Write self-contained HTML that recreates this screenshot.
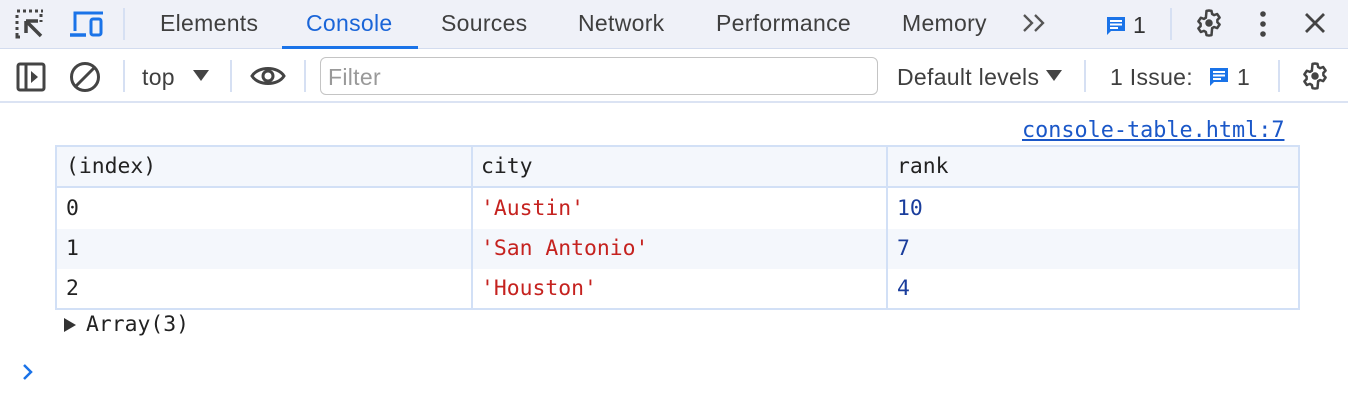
<!DOCTYPE html>
<html><head><style>
*{margin:0;padding:0;box-sizing:border-box}
body{width:1348px;height:415px;background:#fff;position:relative;overflow:hidden;font-family:"Liberation Sans",Arial,sans-serif;color:#3c3c3c}
.a{position:absolute}
.tb{left:0;top:0;width:1348px;height:49px;background:#eff1f8;border-bottom:1px solid #d3dcef}
.t{font-size:23px;top:10px;color:#3f3f3f;letter-spacing:0.3px}
.bar2{left:0;top:50px;width:1348px;height:53px;background:#fff;border-bottom:2px solid #dbe3f3}
.sep{width:2px;background:#d6e0f3}
.mono{font-family:"DejaVu Sans Mono","Liberation Mono",monospace;font-size:21.4px;color:#222}
.cell{position:absolute;height:40px;line-height:40px}
</style></head><body>
<div class="a tb"></div>
<svg class="a" style="left:15px;top:9px" width="30" height="30" viewBox="0 0 30 30"><path d="M2 2h3M8 2h3M14 2h3M20 2h3M26 2h2M2 6v3M2 12v3M2 18v3M2 24v4h3M26 5v3M26 11v2" stroke="#444" stroke-width="3" fill="none"/><path d="M11 12h12M11 12v12M11 12l15 15" stroke="#444" stroke-width="3.5" fill="none"/></svg>
<svg class="a" style="left:68px;top:8px" width="36" height="30" viewBox="0 0 36 30"><path d="M7 23V5h28" stroke="#1a73e8" stroke-width="3" fill="none"/><path d="M2 27h16" stroke="#1a73e8" stroke-width="3.5"/><rect x="23" y="11" width="10" height="16" rx="2" fill="none" stroke="#1a73e8" stroke-width="3"/></svg>
<div class="a sep" style="left:123px;top:8px;height:32px"></div>
<div class="a t" style="left:160px">Elements</div>
<div class="a t" style="left:306px;color:#1a65d8">Console</div>
<div class="a" style="left:282px;top:46px;width:136px;height:3px;background:#1a73e8"></div>
<div class="a t" style="left:441px">Sources</div>
<div class="a t" style="left:578px">Network</div>
<div class="a t" style="left:716px">Performance</div>
<div class="a t" style="left:902px">Memory</div>
<svg class="a" style="left:1022px;top:13px" width="26" height="20" viewBox="0 0 26 20"><path d="M2 2l8 8-8 8M13 2l8 8-8 8" stroke="#555" stroke-width="2.3" fill="none"/></svg>
<svg class="a" style="left:1105px;top:15px" width="22" height="22" viewBox="0 0 22 22"><path d="M2 2h18v14H6l-4 4z" fill="#1a73e8"/><path d="M5 6h12M5 9.5h12M5 13h8" stroke="#fff" stroke-width="2"/></svg>
<div class="a t" style="left:1133px;top:12px;color:#333">1</div>
<div class="a sep" style="left:1170px;top:8px;height:32px"></div>
<svg class="a" style="left:1194px;top:8px" width="30" height="30" viewBox="0 0 24 24"><path d="M12 2l2 .3.5 2.5 1.6.9 2.4-.9 2 2.9-1.8 1.8v1.9l1.8 1.8-2 2.9-2.4-.9-1.6.9L14 21.7 12 22l-2-.3-.5-2.5-1.6-.9-2.4.9-2-2.9 1.8-1.8v-1.9L3.5 10.7l2-2.9 2.4.9 1.6-.9L10 2.3z" fill="none" stroke="#444" stroke-width="2" stroke-linejoin="round"/><circle cx="12" cy="12" r="3" fill="#444"/></svg>
<svg class="a" style="left:1257px;top:10px" width="12" height="28" viewBox="0 0 12 28"><circle cx="6" cy="4" r="2.8" fill="#444"/><circle cx="6" cy="14" r="2.8" fill="#444"/><circle cx="6" cy="24" r="2.8" fill="#444"/></svg>
<svg class="a" style="left:1304px;top:12px" width="22" height="22" viewBox="0 0 22 22"><path d="M2 2l18 18M20 2L2 20" stroke="#444" stroke-width="2.8"/></svg>

<div class="a bar2"></div>
<svg class="a" style="left:16px;top:62px" width="30" height="30" viewBox="0 0 30 30"><rect x="2" y="2" width="26" height="26" rx="2" fill="none" stroke="#444" stroke-width="3"/><path d="M10 2v26" stroke="#444" stroke-width="3"/><path d="M15 9l7 6-7 6z" fill="#444"/></svg>
<svg class="a" style="left:69px;top:61px" width="32" height="32" viewBox="0 0 32 32"><circle cx="16" cy="16" r="13.5" fill="none" stroke="#444" stroke-width="3"/><path d="M7 25L25 7" stroke="#444" stroke-width="3"/></svg>
<div class="a sep" style="left:123px;top:60px;height:32px"></div>
<div class="a t" style="left:142px;top:64px">top</div>
<svg class="a" style="left:193px;top:70px" width="16" height="12"><path d="M0 0h16L8 11z" fill="#444"/></svg>
<div class="a sep" style="left:230px;top:60px;height:32px"></div>
<svg class="a" style="left:250px;top:63px" width="36" height="26" viewBox="0 0 36 26"><path d="M2 13C8 3 28 3 34 13C28 23 8 23 2 13z" fill="none" stroke="#444" stroke-width="3"/><circle cx="18" cy="13" r="5" fill="none" stroke="#444" stroke-width="3"/></svg>
<div class="a sep" style="left:304px;top:60px;height:32px"></div>
<div class="a" style="left:320px;top:57px;width:558px;height:38px;border:1.5px solid #c4c4c4;border-radius:6px"></div>
<div class="a t" style="left:328px;top:64px;color:#999">Filter</div>
<div class="a t" style="left:897px;top:64px">Default levels</div>
<svg class="a" style="left:1046px;top:70px" width="16" height="12"><path d="M0 0h16L8 11z" fill="#444"/></svg>
<div class="a sep" style="left:1084px;top:60px;height:32px"></div>
<div class="a t" style="left:1110px;top:64px">1 Issue:</div>
<svg class="a" style="left:1208px;top:66px" width="22" height="22" viewBox="0 0 22 22"><path d="M2 2h18v14H6l-4 4z" fill="#1a73e8"/><path d="M5 6h12M5 9.5h12M5 13h8" stroke="#fff" stroke-width="2"/></svg>
<div class="a t" style="left:1237px;top:64px">1</div>
<div class="a sep" style="left:1278px;top:60px;height:32px"></div>
<svg class="a" style="left:1300px;top:61px" width="30" height="30" viewBox="0 0 24 24"><path d="M12 2l2 .3.5 2.5 1.6.9 2.4-.9 2 2.9-1.8 1.8v1.9l1.8 1.8-2 2.9-2.4-.9-1.6.9L14 21.7 12 22l-2-.3-.5-2.5-1.6-.9-2.4.9-2-2.9 1.8-1.8v-1.9L3.5 10.7l2-2.9 2.4.9 1.6-.9L10 2.3z" fill="none" stroke="#444" stroke-width="2" stroke-linejoin="round"/><circle cx="12" cy="12" r="3" fill="#444"/></svg>

<div class="a mono" style="left:1022px;top:118px;color:#1a57c8;text-decoration:underline;font-size:21.8px">console-table.html:7</div>

<div class="a" style="left:55px;top:145px;width:1245px;height:165px;border:2px solid #d2e0f6">
 <div class="a" style="left:0;top:0;width:1241px;height:41px;background:#f4f7fc;border-bottom:2px solid #d2e0f6"></div>
 <div class="a" style="left:0;top:82px;width:1241px;height:40px;background:#f4f7fc"></div>
 <div class="a" style="left:414px;top:0;width:2px;height:161px;background:#d2e0f6"></div>
 <div class="a" style="left:829px;top:0;width:2px;height:161px;background:#d2e0f6"></div>
 <div class="cell mono" style="left:9px;top:0">(index)</div>
 <div class="cell mono" style="left:424px;top:0">city</div>
 <div class="cell mono" style="left:840px;top:0">rank</div>
 <div class="cell mono" style="left:9px;top:42px">0</div>
 <div class="cell mono" style="left:424px;top:42px;color:#c5221f">'Austin'</div>
 <div class="cell mono" style="left:840px;top:42px;color:#1a3d9c">10</div>
 <div class="cell mono" style="left:9px;top:82px">1</div>
 <div class="cell mono" style="left:424px;top:82px;color:#c5221f">'San Antonio'</div>
 <div class="cell mono" style="left:840px;top:82px;color:#1a3d9c">7</div>
 <div class="cell mono" style="left:9px;top:122px">2</div>
 <div class="cell mono" style="left:424px;top:122px;color:#c5221f">'Houston'</div>
 <div class="cell mono" style="left:840px;top:122px;color:#1a3d9c">4</div>
</div>
<svg class="a" style="left:64px;top:318px" width="12" height="14"><path d="M0 0l12 7-12 7z" fill="#333"/></svg>
<div class="a mono" style="left:86px;top:312px">Array(3)</div>
<svg class="a" style="left:22px;top:363px" width="12" height="18"><path d="M2 2l7 7-7 7" stroke="#1a73e8" stroke-width="2.5" fill="none"/></svg>
</body></html>
